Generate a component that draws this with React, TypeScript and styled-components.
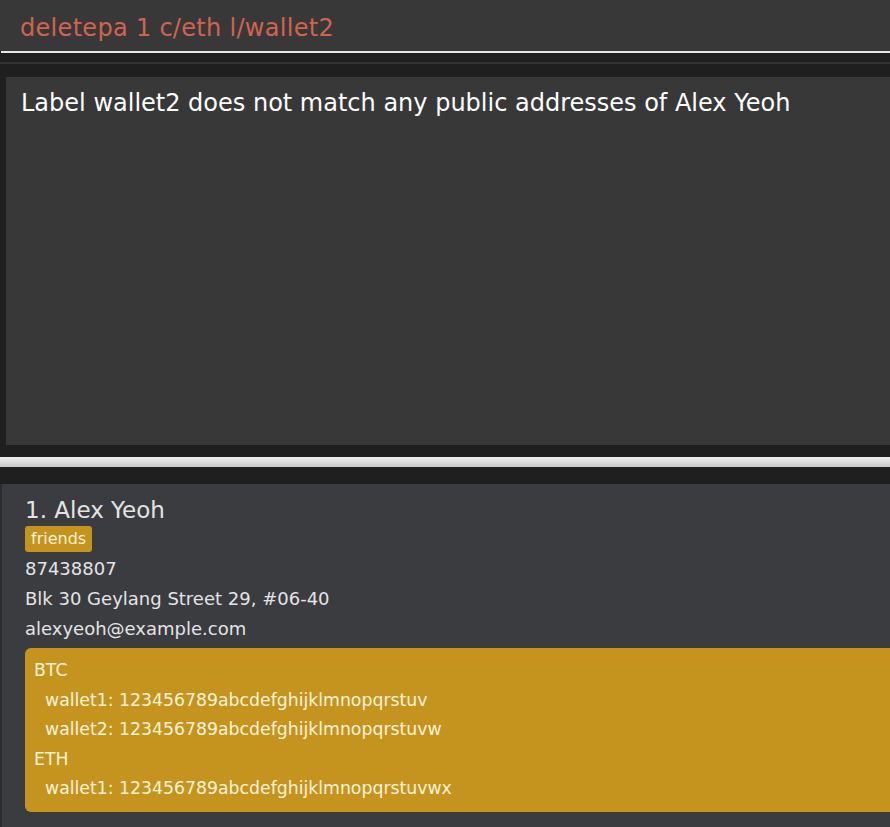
import React from "react";
import styled, { createGlobalStyle } from "styled-components";

const GlobalStyle = createGlobalStyle`
  html, body {
    margin: 0;
    padding: 0;
    background: #1f1f1f;
    overflow: hidden;
  }
  body {
    font-family: "Comic Sans MS", "DejaVu Sans", sans-serif;
  }
`;

const Window = styled.div`
  width: 890px;
  height: 827px;
  display: flex;
  flex-direction: column;
  background: #1f1f1f;
`;

const CommandBar = styled.div`
  height: 51px;
  background: #383838;
  display: flex;
  align-items: center;
  padding: 4px 0 0 20px;
  box-sizing: border-box;
  color: #d0644f;
  font-size: 24px;
  letter-spacing: 0.3px;
`;

const CommandLine = styled.div`
  height: 2px;
  margin-left: 1px;
  background: #e8e8e8;
`;

const Separator = styled.div`
  height: 2px;
  margin-top: 9px;
  margin-bottom: 13px;
  background: #323232;
`;

const ResultBox = styled.div`
  margin-left: 6px;
  height: 368px;
  background: #383838;
  box-sizing: border-box;
  padding: 12px 15px;
  color: #ffffff;
  font-size: 24px;
`;

const Splitter = styled.div`
  height: 10px;
  margin: 12px 0 17px;
  background: linear-gradient(#f0f0f0, #dcdcdc 50%, #c8c8c8);
`;

const ListArea = styled.div`
  flex: 1;
  display: flex;
  background: #2b2c2f;
`;

const Card = styled.div`
  flex: 1;
  margin-left: 2px;
  background: #3b3c40;
  padding: 11px 0 0 23px;
  color: #e4e4e4;
`;

const Name = styled.div`
  font-size: 23px;
  line-height: 31px;
`;

const Tag = styled.span`
  display: inline-block;
  background: #c4941f;
  color: #fdf3d8;
  font-size: 16px;
  line-height: 26px;
  padding: 0 6px;
  border-radius: 3px;
  margin-bottom: 2px;
`;

const Detail = styled.div`
  font-size: 18px;
  line-height: 30px;
`;

const WalletBox = styled.div`
  margin-top: 4px;
  background: #c4941f;
  border-radius: 6px 0 0 6px;
  padding: 8px 0 8px 9px;
  color: #fdf3d8;
  font-size: 17.3px;
`;

const WalletLine = styled.div<{ $indent?: boolean }>`
  line-height: 29.5px;
  padding-left: ${p => (p.$indent ? "11px" : "0")};
  white-space: pre;
`;

const wallets = [
  { chain: "BTC", items: ["wallet1: 123456789abcdefghijklmnopqrstuv", "wallet2: 123456789abcdefghijklmnopqrstuvw"] },
  { chain: "ETH", items: ["wallet1: 123456789abcdefghijklmnopqrstuvwx"] }
];

const App = () => (
  <Window>
    <GlobalStyle />
    <CommandBar>deletepa 1 c/eth l/wallet2</CommandBar>
    <CommandLine />
    <Separator />
    <ResultBox>Label wallet2 does not match any public addresses of Alex Yeoh</ResultBox>
    <Splitter />
    <ListArea>
      <Card>
        <Name>1. Alex Yeoh</Name>
        <Tag>friends</Tag>
        <Detail>87438807</Detail>
        <Detail>Blk 30 Geylang Street 29, #06-40</Detail>
        <Detail>alexyeoh@example.com</Detail>
        <WalletBox>
          {wallets.map(w => (
            <React.Fragment key={w.chain}>
              <WalletLine>{w.chain}</WalletLine>
              {w.items.map(i => (
                <WalletLine key={i} $indent>
                  {i}
                </WalletLine>
              ))}
            </React.Fragment>
          ))}
        </WalletBox>
      </Card>
    </ListArea>
  </Window>
);

export default App;
